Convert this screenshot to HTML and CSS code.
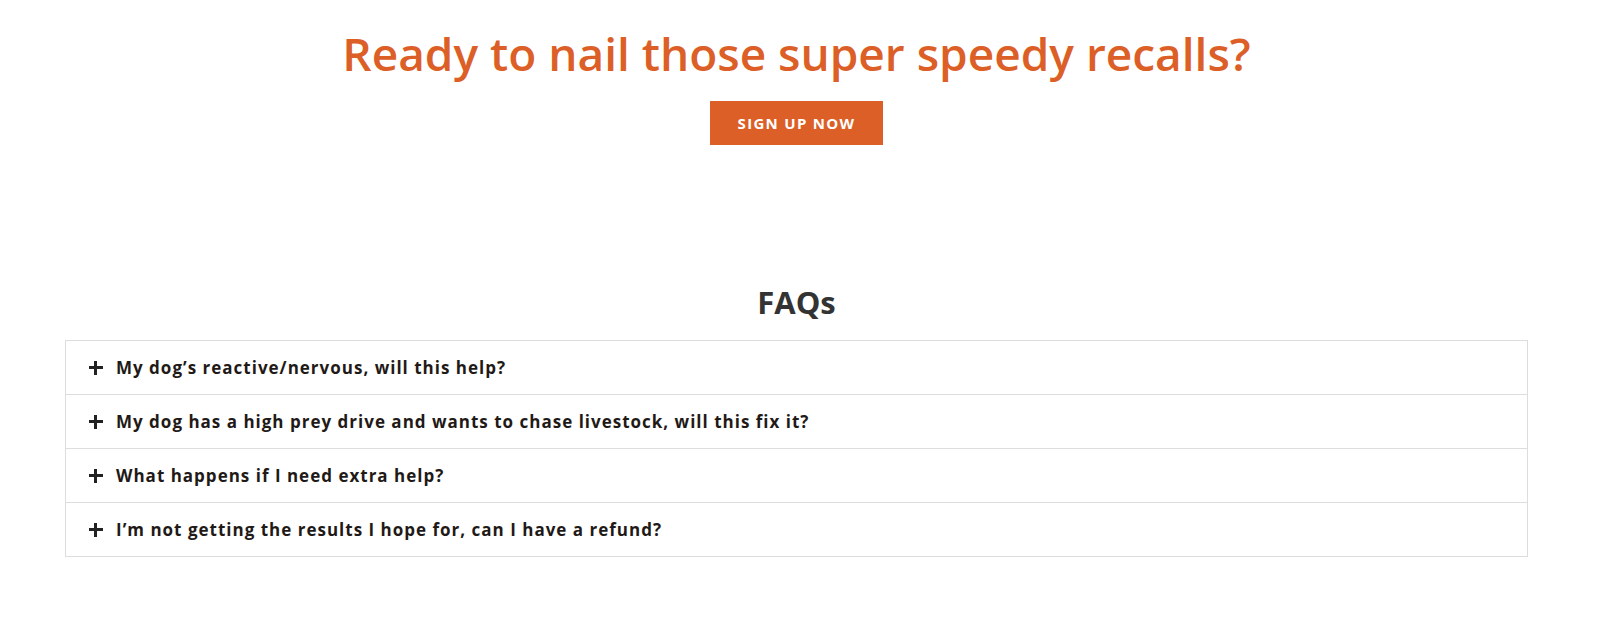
FILE: index.html
```html
<!DOCTYPE html>
<html lang="en">
<head>
<meta charset="utf-8">
<title>Recall training</title>
<link rel="stylesheet" href="styles.css">
</head>
<body>
<div class="page">
  <section class="cta">
    <h1 class="cta-title">Ready to nail those super speedy recalls?</h1>
    <a class="cta-button" href="#">SIGN UP NOW</a>
  </section>
  <section class="faq">
    <h2 class="faq-title">FAQs</h2>
    <div class="faq-list">
      <div class="faq-item"><span class="faq-icon"></span><span class="faq-q">My dog’s reactive/nervous, will this help?</span></div>
      <div class="faq-item"><span class="faq-icon"></span><span class="faq-q">My dog has a high prey drive and wants to chase livestock, will this fix it?</span></div>
      <div class="faq-item"><span class="faq-icon"></span><span class="faq-q">What happens if I need extra help?</span></div>
      <div class="faq-item"><span class="faq-icon"></span><span class="faq-q">I’m not getting the results I hope for, can I have a refund?</span></div>
    </div>
  </section>
</div>
</body>
</html>
```
FILE: styles.css
```css
html, body {
  margin: 0;
  padding: 0;
  background: #ffffff;
}
body {
  font-family: "Open Sans", "Noto Sans", sans-serif;
}
.page {
  width: 1463px;
  margin-left: 65px;
}
.cta {
  display: flex;
  flex-direction: column;
  align-items: center;
  padding-top: 24px;
}
.cta-title {
  margin: 0;
  font-size: 46px;
  line-height: 58px;
  font-weight: 600;
  color: #dc5f27;
  letter-spacing: 0;
}
.cta-button {
  display: flex;
  align-items: center;
  justify-content: center;
  margin-top: 19px;
  width: 173px;
  height: 44px;
  background: #dc5f27;
  color: #ffffff;
  font-size: 15px;
  font-weight: 700;
  letter-spacing: 1.3px;
  text-decoration: none;
}
.faq {
  padding-top: 136px;
}
.faq-title {
  margin: 0 0 17px;
  text-align: center;
  font-size: 31px;
  line-height: 42px;
  font-weight: 700;
  color: #333333;
}
.faq-list {
  border: 1px solid #dddddd;
}
.faq-item {
  display: flex;
  align-items: center;
  height: 53px;
  padding-left: 23px;
  border-top: 1px solid #dddddd;
}
.faq-item:first-child {
  border-top: 0;
}
.faq-icon {
  position: relative;
  width: 14px;
  height: 14px;
  flex: none;
  margin-right: 13px;
}
.faq-icon::before,
.faq-icon::after {
  content: "";
  position: absolute;
  background: #222222;
}
.faq-icon::before {
  left: 0;
  right: 0;
  top: 5px;
  height: 3px;
}
.faq-icon::after {
  top: 0;
  bottom: 0;
  left: 5px;
  width: 3px;
}
.faq-q {
  font-size: 17px;
  font-weight: 700;
  letter-spacing: 1px;
  color: #1f1a17;
}
```
